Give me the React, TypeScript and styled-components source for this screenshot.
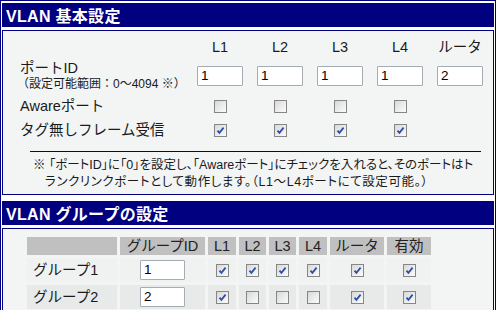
import React from "react";
import styled, { createGlobalStyle } from "styled-components";

const GlobalStyle = createGlobalStyle`
  html, body { margin: 0; padding: 0; background: #ffffff; }
  body {
    font-family: "Liberation Sans", "Noto Sans CJK JP", sans-serif;
    color: #1a1a1a;
  }
`;

const Frame = styled.div`
  box-sizing: border-box;
  width: 496px;
  border: 1px solid #000080;
  border-bottom: none;
  padding: 2px 1px 0 1px;
  display: flex;
  flex-direction: column;
`;

const SectionHeader = styled.div`
  height: 24px;
  background: #000080;
  color: #ffffff;
  font-weight: bold;
  font-size: 16px;
  padding-left: 4px;
  display: flex;
  align-items: center;
  margin-bottom: 3px;
  letter-spacing: 0.3px;
`;

const SectionBody = styled.div<{ $gap?: number }>`
  border: 1px solid #000080;
  background: #f3f5f5;
  margin-bottom: ${(p) => p.$gap ?? 0}px;
`;

const BasicGrid = styled.div`
  display: grid;
  grid-template-columns: 170px repeat(5, 60px);
  grid-template-rows: 19px 36px 24px 24px;
  padding: 8px 0 0 17px;
  font-size: 14.5px;
`;

const ColHead = styled.div`
  display: flex;
  justify-content: center;
  align-items: flex-start;
  line-height: 16px;
`;

const RowLabel = styled.div`
  display: flex;
  flex-direction: column;
  justify-content: center;
  line-height: 16px;
`;

const SubLabel = styled.span`
  font-size: 12px;
  margin-left: -3px;
`;

const Cell = styled.div`
  display: flex;
  justify-content: center;
  align-items: center;
`;

const TextBox = styled.div<{ $w?: number }>`
  box-sizing: border-box;
  width: ${(p) => p.$w ?? 46}px;
  height: 20px;
  background: #ffffff;
  border: 1px solid #a5acb2;
  border-radius: 1px;
  font-family: "Liberation Sans", sans-serif;
  font-size: 13.5px;
  line-height: 18px;
  padding-left: 3px;
  color: #000;
`;

const CheckBox = styled.span`
  box-sizing: border-box;
  display: inline-flex;
  width: 13px;
  height: 13px;
  border: 1px solid #868686;
  background: linear-gradient(135deg, #d8d8d8 0%, #eeeeee 60%, #fafafa 100%);
  align-items: center;
  justify-content: center;
`;

const Separator = styled.div`
  height: 1px;
  background: #000080;
  margin: 9px 12px 0 27px;
`;

const Note = styled.div`
  padding: 5px 0 3px 30px;
  font-size: 12.5px;
  line-height: 17px;
  white-space: nowrap;
  font-feature-settings: "palt";
`;

const NoteLine = styled.div<{ $indent?: number; $spacing?: number }>`
  padding-left: ${(p) => p.$indent ?? 0}px;
  letter-spacing: ${(p) => p.$spacing ?? 0}px;
`;

const GroupGrid = styled.div`
  display: grid;
  grid-template-columns: 90px 85px 28px 27px 27px 28px 54px 44px;
  grid-template-rows: 18px 24px 24px;
  gap: 3px;
  padding: 8px 0 0 24px;
  font-size: 14.5px;
`;

const GroupHead = styled.div`
  background: #c0c0c0;
  color: #222;
  display: flex;
  justify-content: center;
  align-items: center;
  line-height: 16px;
`;

const GroupCell = styled.div<{ $alt?: boolean; $left?: boolean }>`
  background: ${(p) => (p.$alt ? "#e8e9e9" : "#f0f1f1")};
  display: flex;
  align-items: center;
  justify-content: ${(p) => (p.$left ? "flex-start" : "center")};
  padding-left: ${(p) => (p.$left ? "6px" : "0")};
  line-height: 16px;
`;

const Check: React.FC<{ checked?: boolean }> = ({ checked }) => (
  <CheckBox>
    {checked && (
      <svg width="9" height="9" viewBox="0 0 9 9">
        <path d="M1.5 4.6 L3.4 6.8 L7.6 1.6" fill="none" stroke="#2f4ea6" strokeWidth="1.8" />
      </svg>
    )}
  </CheckBox>
);

const cols = ["L1", "L2", "L3", "L4", "ルータ"];
const ids = ["1", "1", "1", "1", "2"];

const groups = [
  { name: "グループ1", id: "1", checks: [true, true, true, true, true, true] },
  { name: "グループ2", id: "2", checks: [true, false, false, false, true, true] },
];

const groupHeads = ["", "グループID", "L1", "L2", "L3", "L4", "ルータ", "有効"];

export default function App() {
  return (
    <>
      <GlobalStyle />
      <Frame>
        <SectionHeader>VLAN 基本設定</SectionHeader>
        <SectionBody $gap={6}>
          <BasicGrid>
            <div />
            {cols.map((c) => (
              <ColHead key={c}>{c}</ColHead>
            ))}
            <RowLabel>
              <span>ポートID</span>
              <SubLabel>（設定可能範囲：0～4094 ※）</SubLabel>
            </RowLabel>
            {ids.map((v, i) => (
              <Cell key={i}>
                <TextBox>{v}</TextBox>
              </Cell>
            ))}
            <RowLabel>Awareポート</RowLabel>
            {[0, 1, 2, 3].map((i) => (
              <Cell key={i}>
                <Check />
              </Cell>
            ))}
            <div />
            <RowLabel>タグ無しフレーム受信</RowLabel>
            {[0, 1, 2, 3].map((i) => (
              <Cell key={i}>
                <Check checked />
              </Cell>
            ))}
            <div />
          </BasicGrid>
          <Separator />
          <Note>
            <NoteLine>※ 「ポートID」に「0」を設定し、「Awareポート」にチェックを入れると、そのポートはト</NoteLine>
            <NoteLine $indent={12} $spacing={0.6}>ランクリンクポートとして動作します。（L1～L4ポートにて設定可能。）</NoteLine>
          </Note>
        </SectionBody>
        <SectionHeader>VLAN グループの設定</SectionHeader>
        <SectionBody>
          <GroupGrid>
            {groupHeads.map((h, i) => (
              <GroupHead key={i}>{h}</GroupHead>
            ))}
            {groups.map((g, r) => (
              <React.Fragment key={g.name}>
                <GroupCell $alt={r === 1} $left>
                  {g.name}
                </GroupCell>
                <GroupCell $alt={r === 1}>
                  <TextBox $w={45}>{g.id}</TextBox>
                </GroupCell>
                {g.checks.map((c, i) => (
                  <GroupCell key={i} $alt={r === 1}>
                    <Check checked={c} />
                  </GroupCell>
                ))}
              </React.Fragment>
            ))}
          </GroupGrid>
          <div style={{ height: 20 }} />
        </SectionBody>
      </Frame>
    </>
  );
}
